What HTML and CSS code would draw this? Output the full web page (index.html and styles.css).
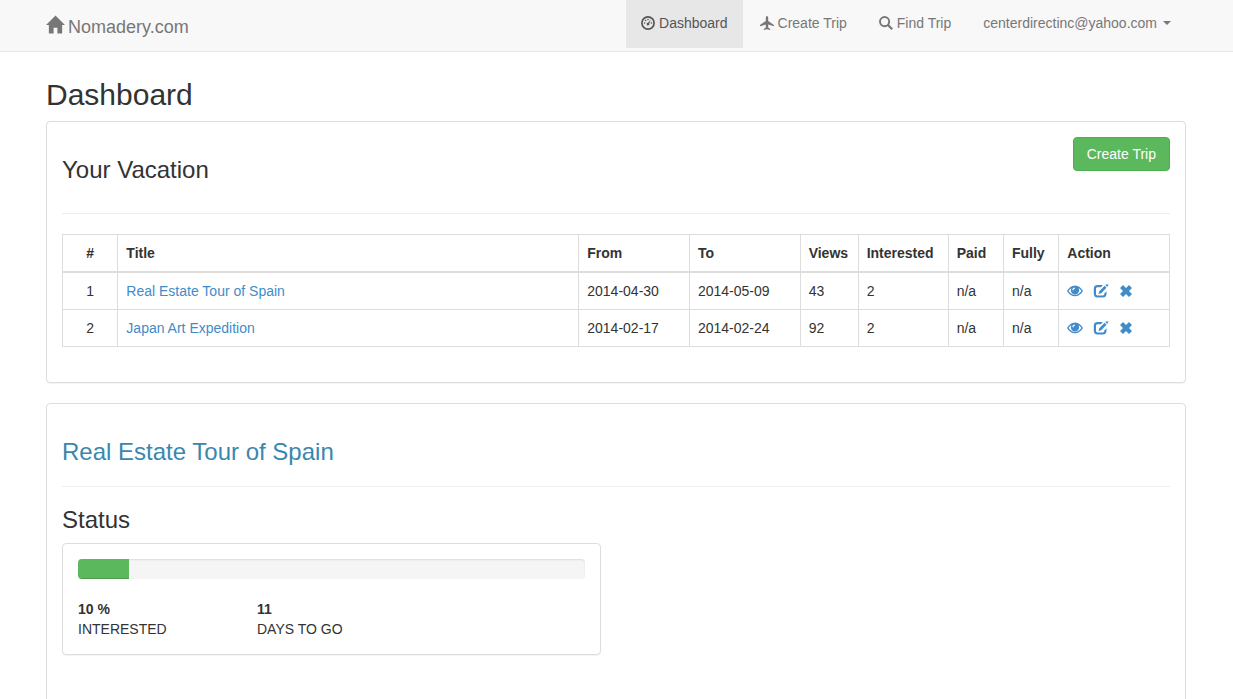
FILE: index.html
```html
<!DOCTYPE html>
<html lang="en">
<head>
<meta charset="utf-8">
<title>Dashboard - Nomadery.com</title>
<link rel="stylesheet" href="styles.css">
</head>
<body>
<svg class="sprite" aria-hidden="true">
  <symbol id="eye" viewBox="0 0 16 14">
    <path fill-rule="evenodd" d="M8 1.500C4.500 1.500 2 3.800 0 7c2 3.200 4.500 5.300 8 5.300s6-2.100 8-5.300c-2-3.200-4.500-5.500-8-5.500zM8 10.900C5.300 10.900 3.200 9.400 1.600 7 2.300 5.800 3.300 4.800 4.500 4.100 4 4.900 3.800 5.500 3.800 6.300a4.200 4.200 0 0 0 8.400 0c0-.8-.2-1.400-.7-2.200 1.200.7 2.200 1.700 2.900 2.900-1.600 2.400-3.700 3.900-6.400 3.900zM5.300 6.200c0-1.500 1-2.600 2.500-2.700v1.200c-.8.100-1.300.7-1.400 1.500z"/>
  </symbol>
  <symbol id="edit" viewBox="0 0 16 14">
    <path d="M10 1H4.500A3.700 3.700 0 0 0 .8 4.700v5.100a3.700 3.700 0 0 0 3.700 3.700h5.300a3.700 3.700 0 0 0 3.700-3.700V7.200l-2.200 2.200v.4c0 1-.6 1.600-1.600 1.600H4.600c-1 0-1.600-.6-1.600-1.600V4.800c0-1 .6-1.600 1.600-1.600h3.200z"/>
    <path d="M11.600 1.800l1.900 1.900-5.300 5.500-2.700.8.800-2.700zM12.300 1.100l.7-.6h2.700l-1.500 2.500z"/>
  </symbol>
  <symbol id="remove" viewBox="0 0 14 14">
    <path d="M4 1 7 4l3-3 3 3-3 3 3 3-3 3-3-3-3 3-3-3 3-3-3-3z"/>
  </symbol>
</svg>

<header class="navbar">
  <div class="container navbar-inner">
    <a class="brand" href="#">
      <svg class="icon-home" viewBox="0 0 20 19" aria-hidden="true"><path d="M10 0 20 10h-3v9h-5v-6H8v6H3v-9H0z"/></svg>
      Nomadery.com
    </a>
    <nav class="nav">
      <a class="nav-link active" href="#">
        <svg class="icon" viewBox="0 0 14 14" aria-hidden="true">
          <circle cx="7" cy="7" r="6.100" fill="none" stroke="currentColor" stroke-width="1.700"/>
          <circle cx="3.600" cy="7" r=".8"/><circle cx="4.600" cy="4.500" r=".8"/><circle cx="7" cy="3.500" r=".8"/><circle cx="10.400" cy="7" r=".8"/>
          <path d="M9.900 3.600 8.200 7.600a1.300 1.300 0 1 1-1.100-.8z"/>
        </svg>
        Dashboard
      </a>
      <a class="nav-link" href="#">
        <svg class="icon" viewBox="0 0 14 14" aria-hidden="true"><path d="M7 0c.8 0 1.200 1 1.200 2v3L14 9v1.300L8.200 8.600v3l2 1.500v.9L7 13.200 3.800 14v-.9l2-1.500v-3L0 10.300V9l5.800-4V2C5.800 1 6.200 0 7 0z"/></svg>
        Create Trip
      </a>
      <a class="nav-link" href="#">
        <svg class="icon" viewBox="0 0 14 14" aria-hidden="true"><circle cx="5.600" cy="5.600" r="4.600" fill="none" stroke="currentColor" stroke-width="1.900"/><path d="m8 9.500 1.500-1.500 4.500 4.400-1.600 1.600z"/></svg>
        Find Trip
      </a>
      <a class="nav-link" href="#">centerdirectinc@yahoo.com<span class="caret"></span></a>
    </nav>
  </div>
</header>

<main class="container">
  <h1>Dashboard</h1>

  <section class="panel">
    <div class="panel-header">
      <h2>Your Vacation</h2>
      <button class="btn" type="button">Create Trip</button>
    </div>
    <table class="trips">
      <colgroup>
        <col class="w-5"><col><col class="w-10"><col class="w-10"><col class="w-views"><col class="w-interested"><col class="w-5"><col class="w-5"><col class="w-10">
      </colgroup>
      <thead>
        <tr><th class="center">#</th><th>Title</th><th>From</th><th>To</th><th>Views</th><th>Interested</th><th>Paid</th><th>Fully</th><th>Action</th></tr>
      </thead>
      <tbody>
        <tr>
          <td class="center">1</td><td><a href="#">Real Estate Tour of Spain</a></td><td>2014-04-30</td><td>2014-05-09</td><td>43</td><td>2</td><td>n/a</td><td>n/a</td>
          <td><div class="actions">
            <a href="#" aria-label="View"><svg class="icon-wide"><use href="#eye"/></svg></a>
            <a href="#" aria-label="Edit"><svg class="icon-wide"><use href="#edit"/></svg></a>
            <a href="#" aria-label="Remove"><svg class="icon"><use href="#remove"/></svg></a>
          </div></td>
        </tr>
        <tr>
          <td class="center">2</td><td><a href="#">Japan Art Expedition</a></td><td>2014-02-17</td><td>2014-02-24</td><td>92</td><td>2</td><td>n/a</td><td>n/a</td>
          <td><div class="actions">
            <a href="#" aria-label="View"><svg class="icon-wide"><use href="#eye"/></svg></a>
            <a href="#" aria-label="Edit"><svg class="icon-wide"><use href="#edit"/></svg></a>
            <a href="#" aria-label="Remove"><svg class="icon"><use href="#remove"/></svg></a>
          </div></td>
        </tr>
      </tbody>
    </table>
  </section>

  <section class="panel trip">
    <h2 class="trip-title"><a href="#">Real Estate Tour of Spain</a></h2>
    <h2>Status</h2>
    <div class="status">
      <div class="progress"><div class="progress-bar" style="width: 10%"></div></div>
      <div class="stats">
        <div><strong>10 %</strong><br>INTERESTED</div>
        <div><strong>11</strong><br>DAYS TO GO</div>
      </div>
    </div>
  </section>
</main>
</body>
</html>
```
FILE: styles.css
```css
* { box-sizing: border-box; }

body {
  margin: 0;
  background: #fff;
  color: #333;
  font: 14px/20px "Liberation Sans", Arial, sans-serif;
}

a { color: #428bca; text-decoration: none; }
svg { fill: currentColor; }
.sprite { display: none; }

/* The page may scroll, but without a visible bar. */
html { scrollbar-width: none; }

.container {
  max-width: 1171px;
  margin: 0 auto;
  padding: 0 16px 0 15px;
}

.navbar {
  background: #f8f8f8;
  border-bottom: 1px solid #e7e7e7;
}
.navbar-inner {
  display: flex;
  justify-content: space-between;
  align-items: flex-start;
}
.brand {
  display: flex;
  gap: 3px;
  padding: 15px 0 12px;
  color: #777;
  font-size: 18px;
  line-height: 24px;
}
.icon-home { width: 19px; height: 19px; }

.nav { display: flex; gap: 2px; }
.nav-link {
  display: flex;
  align-items: center;
  gap: 4px;
  padding: 13px 15px 15px;
  color: #777;
  white-space: nowrap;
}
.nav-link.active { background: #e7e7e7; color: #555; }
.icon { display: block; width: 14px; height: 14px; }
.icon-wide { display: block; width: 16px; height: 14px; }
.caret {
  margin-left: 2px;
  border-top: 4px solid;
  border-left: 4px solid transparent;
  border-right: 4px solid transparent;
}

h1, h2 { font-weight: 400; }
h1 { margin: 26px 0 10px; font-size: 30px; line-height: 33px; }
h2 { margin: 20px 0 10px; font-size: 24px; line-height: 26px; }

.panel {
  margin-bottom: 20px;
  padding: 15px;
  border: 1px solid #ddd;
  border-radius: 4px;
  box-shadow: 0 1px 1px rgba(0, 0, 0, .05);
}
.panel-header {
  display: flex;
  justify-content: space-between;
  align-items: flex-start;
  margin-bottom: 20px;
  padding-bottom: 20px;
  border-bottom: 1px solid #eee;
}
.btn {
  padding: 6px 13px;
  border: 1px solid #4cae4c;
  border-radius: 4px;
  background: #5cb85c;
  color: #fff;
  font: inherit;
}

.trips {
  width: 100%;
  margin-bottom: 20px;
  border-collapse: collapse;
  table-layout: fixed;
}
.trips th, .trips td {
  padding: 8px;
  border: 1px solid #ddd;
  text-align: left;
}
.trips th { border-bottom-width: 2px; }
.trips .center { text-align: center; }
.w-5 { width: 5%; }
.w-10 { width: 10%; }
.w-views { width: 58px; }
.w-interested { width: 90px; }
.actions { display: flex; gap: 10px; }

.trip { min-height: 320px; }
.trip-title {
  margin-bottom: 20px;
  padding-bottom: 21px;
  border-bottom: 1px solid #eee;
}
.trip-title a { color: #3a87ad; }

.status {
  width: calc(50% - 15px);
  padding: 15px;
  border: 1px solid #ddd;
  border-radius: 4px;
  box-shadow: 0 1px 1px rgba(0, 0, 0, .05);
}
.progress {
  height: 20px;
  margin-bottom: 20px;
  overflow: hidden;
  border-radius: 4px;
  background: #f5f5f5;
  box-shadow: inset 0 1px 2px rgba(0, 0, 0, .1);
}
.progress-bar {
  height: 100%;
  background: #5cb85c;
  box-shadow: inset 0 -1px 0 rgba(0, 0, 0, .15);
}
.stats {
  display: grid;
  grid-template-columns: repeat(3, 1fr);
  margin-right: -30px;
}
```
